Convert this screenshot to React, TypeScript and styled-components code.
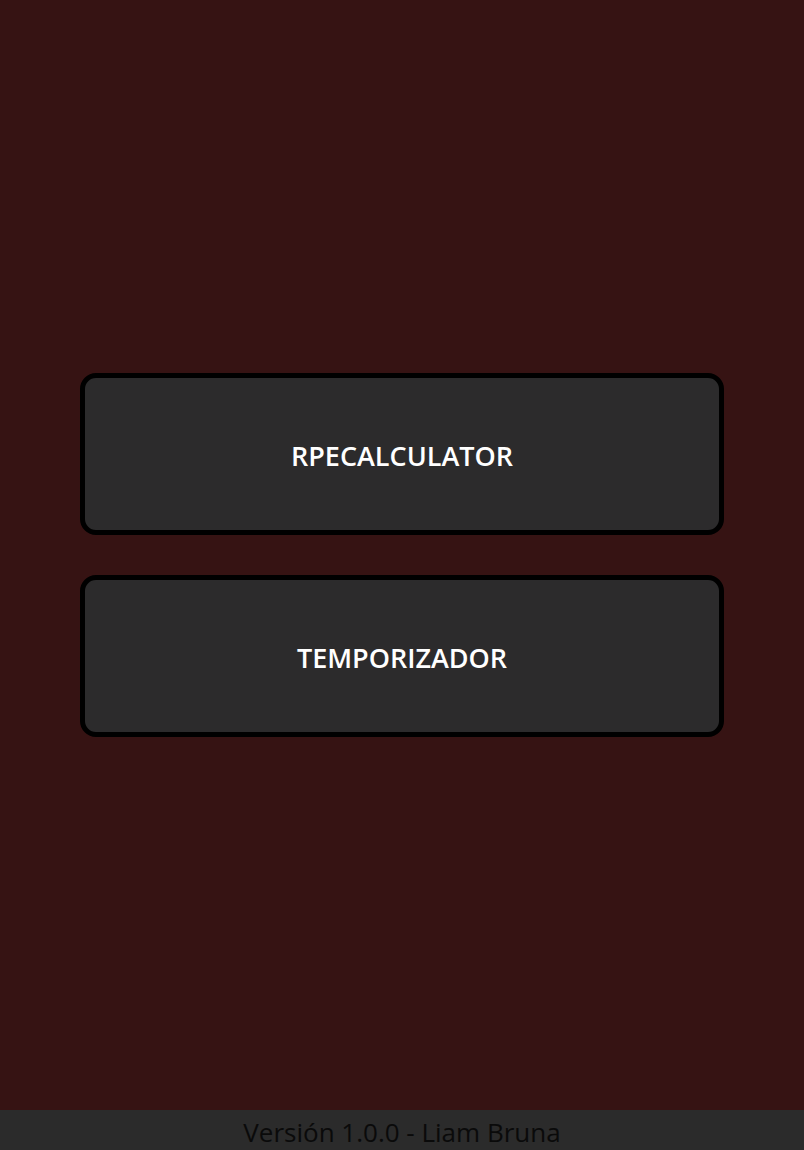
import React from "react";
import styled, { createGlobalStyle } from "styled-components";

const GlobalStyle = createGlobalStyle`
  html, body {
    margin: 0;
    padding: 0;
    background: #361313;
  }
  * { box-sizing: border-box; }
`;

const Page = styled.div`
  min-height: 100vh;
  display: flex;
  flex-direction: column;
  background: #361313;
  font-family: "Open Sans", "Noto Sans", sans-serif;
`;

const Main = styled.main`
  flex: 1;
  display: flex;
  flex-direction: column;
  justify-content: center;
  align-items: stretch;
  gap: 40px;
  padding: 0 80px;
`;

const MenuButton = styled.button`
  height: 162px;
  width: 100%;
  background: #2c2b2c;
  border: 5px solid #000;
  border-radius: 16px;
  color: #fff;
  font-family: "Open Sans", "Noto Sans", sans-serif;
  font-weight: 600;
  font-size: 27px;
  cursor: pointer;
  padding: 2px 0 0;
`;

const Footer = styled.footer`
  height: 40px;
  background: #2b2b2b;
  display: flex;
  align-items: center;
  justify-content: center;
  color: #0a0a0a;
  font-size: 26px;
  font-family: "Open Sans", "Noto Sans", sans-serif;
  overflow: hidden;
  line-height: 40px;
  padding-top: 4px;
`;

export default function App() {
  return (
    <>
      <GlobalStyle />
      <Page>
        <Main>
          <MenuButton>RPECALCULATOR</MenuButton>
          <MenuButton>TEMPORIZADOR</MenuButton>
        </Main>
        <Footer>Versión 1.0.0 - Liam Bruna</Footer>
      </Page>
    </>
  );
}
